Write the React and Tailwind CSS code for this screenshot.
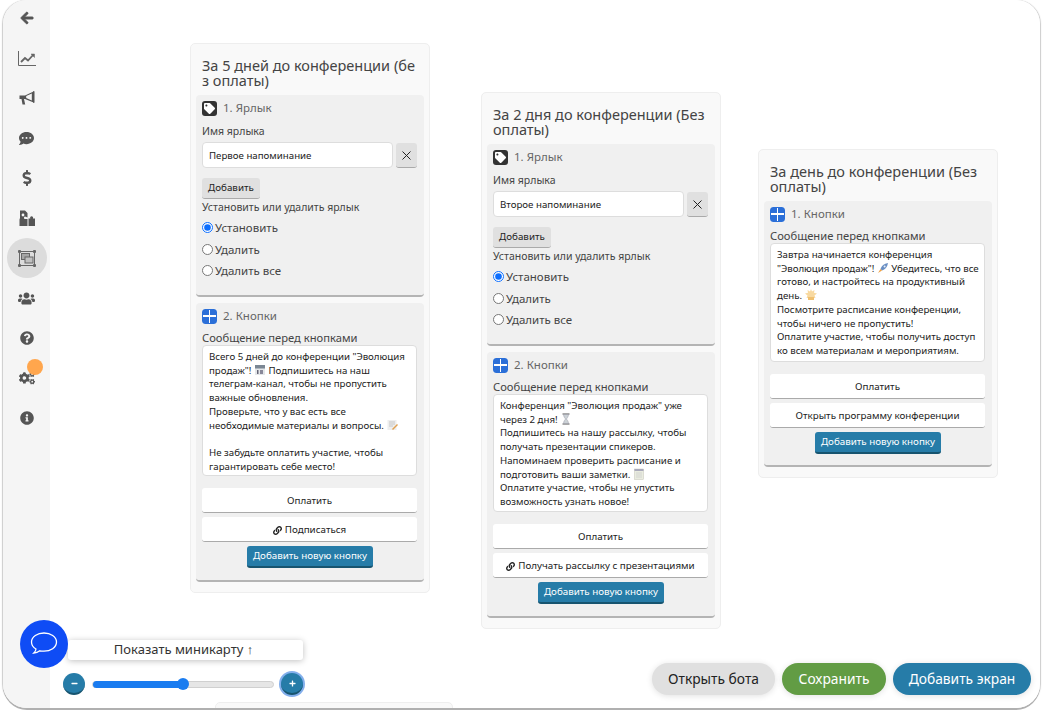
import React from "react";
import { FaArrowLeft, FaCommentDots, FaDollarSign, FaUsers, FaQuestionCircle, FaCogs, FaInfoCircle, FaLink, FaTag, FaPlus, FaMinus } from "react-icons/fa";

const Emoji = ({ kind }) => {
  const c = "inline-block w-[12px] h-[12px] align-[-2px]";
  if (kind === "cal") return <svg className={c} viewBox="0 0 12 12"><rect x="1" y="1" width="10" height="10" fill="#e4e7ea" /><rect x="1" y="1" width="10" height="3.5" fill="#7b8794" /><rect x="3" y="6" width="1.5" height="4" fill="#667" /><rect x="6" y="6" width="3" height="4" fill="#889" /></svg>;
  if (kind === "memo") return <svg className={c} viewBox="0 0 12 12"><rect x="1.5" y="1" width="9" height="10" fill="#eee" /><path d="M3 3h6M3 5h6M3 7h4" stroke="#bbb" strokeWidth="0.8" /><path d="M6 10l5-5 1 1-5 5z" fill="#e0a050" /></svg>;
  if (kind === "glass") return <svg className={c} viewBox="0 0 12 12"><path d="M2.5 1h7M2.5 11h7" stroke="#555" strokeWidth="1.2" /><path d="M3.5 1.5h5C8.5 4 7 5 6.5 6 7 7 8.5 8 8.5 10.5h-5C3.5 8 5 7 5.5 6 5 5 3.5 4 3.5 1.5z" fill="#ccd2d6" stroke="#889" strokeWidth="0.4" /></svg>;
  if (kind === "note") return <svg className={c} viewBox="0 0 12 12"><rect x="1.5" y="1" width="9" height="10.5" fill="#e9ecdf" stroke="#c3c3b8" strokeWidth="0.5" /><rect x="1.5" y="1" width="9" height="2" fill="#aab" /><path d="M3 5h6M3 7h6M3 9h6" stroke="#ccc" strokeWidth="0.7" /></svg>;
  if (kind === "rocket") return <svg className={c} viewBox="0 0 12 12"><path d="M11 1C7 1.5 4.5 4 3.5 7L5 8.5C8 7.5 10.5 5 11 1z" fill="#6a8fc4" /><path d="M3.5 7L1 11l4-2.5z" fill="#f0a040" /><circle cx="7.6" cy="4.4" r="1" fill="#e8eef6" /></svg>;
  return <svg className={c} viewBox="0 0 12 12"><path d="M6 0l1 2.5L9.5 1 9 3.8 12 4.5 9.5 6.5 10.5 9 1.5 9 2.5 6.5 0 4.5 3 3.8 2.5 1 5 2.5z" fill="#f8d9a0" /><rect x="3" y="8" width="6" height="3" fill="#f0c070" /></svg>;
};

const SideIcon = ({ children, active, dot }) => (
  <div className={`relative w-[40px] h-[40px] flex items-center justify-center rounded-full text-[#555] ${active ? "bg-[#dcdcdc]" : ""}`}>
    {children}
    {dot && <span className="absolute left-[20px] top-[1px] w-[16px] h-[16px] rounded-full bg-[#ffa64d]" />}
  </div>
);

const Sidebar = () => (
  <div className="w-[47px] shrink-0 bg-[#f5f5f5] flex flex-col items-center">
    <div className="-mt-[2px] flex flex-col items-center">
      <SideIcon><FaArrowLeft size={14} stroke="currentColor" strokeWidth={30} /></SideIcon>
      <SideIcon>
        <svg width="18" height="15" viewBox="0 0 18 15" fill="none" stroke="#666"><path d="M0.5 0v14.500H18" strokeWidth="1" /><path d="M3 11l4-4 3 2.500L15.500 3.500" strokeWidth="1.800" /><path d="M13 3h3.500v3.500z" fill="#666" strokeWidth="0.5" /></svg>
      </SideIcon>
      <SideIcon>
        <svg width="16" height="15" viewBox="0 0 16 15" fill="#555"><path d="M0.500 4.500h5.500L14 0.800v10.400L6 8H5l1.200 5.500H3.500L2.500 8h-2z" /><path d="M7.200 4.900L12.800 2.600v6.800L7.200 7.100z" fill="#f5f5f5" /><rect x="14" y="0" width="1.500" height="12" rx="0.700" /></svg>
      </SideIcon>
      <SideIcon><FaCommentDots size={15} /></SideIcon>
      <SideIcon><FaDollarSign size={16} /></SideIcon>
      <SideIcon>
        <svg width="16" height="16" viewBox="0 0 16 16" fill="#555"><path d="M1 0.500h5l2.500 2.500v4.500c-1 0-1.500-1-2.500-1S4.500 8 5.500 9H8.500v7H0.500V9.500C0.500 9 1 8.500 1 8z" /><path d="M9.500 8.500h1.800a1.500 1.500 0 1 1 2.600 0H16V16H9.500z" /><circle cx="4" cy="5" r="1.400" fill="#f5f5f5" /></svg>
      </SideIcon>
      <SideIcon active>
        <svg width="18" height="17" viewBox="0 0 18 17" fill="none" stroke="#666" strokeWidth="1"><rect x="1.500" y="1.500" width="15" height="14" /><rect x="3.500" y="3.500" width="8" height="6" fill="#a5a5a5" /><rect x="7" y="7" width="8" height="6" fill="#c0c0c0" /><g fill="#666" stroke="none"><rect x="0" y="0" width="3" height="3" rx="1" /><rect x="15" y="0" width="3" height="3" rx="1" /><rect x="0" y="14" width="3" height="3" rx="1" /><rect x="15" y="14" width="3" height="3" rx="1" /></g></svg>
      </SideIcon>
      <SideIcon><FaUsers size={17} /></SideIcon>
      <SideIcon><FaQuestionCircle size={14} /></SideIcon>
      <SideIcon dot><FaCogs size={16} /></SideIcon>
      <SideIcon><FaInfoCircle size={14} /></SideIcon>
    </div>
  </div>
);

const TagIcon = () => (
  <span className="w-[15px] h-[15px] rounded-[3px] bg-[#333] text-white flex items-center justify-center shrink-0"><FaTag size={11} /></span>
);
const GridIcon = () => (
  <span className="w-[15px] h-[15px] rounded-[3px] bg-white border-[1.500px] border-[#2b6fd8] grid grid-cols-2 gap-[1.500px] shrink-0">
    <i className="bg-[#2b6fd8]" /><i className="bg-[#2b6fd8]" /><i className="bg-[#2b6fd8]" /><i className="bg-[#2b6fd8]" />
  </span>
);

const Section = ({ icon, title, children, className = "" }) => (
  <div className={`bg-[#f0f0f0] rounded-[4px] border-b-2 border-[#b4b4b4] px-[6px] pt-[5px] ${className}`}>
    <div className="flex items-center gap-[6px] h-[16px] text-[11.500px] text-[#666]">{icon}<span>{title}</span></div>
    {children}
  </div>
);

const Radio = ({ label, checked }) => (
  <label className="flex items-center gap-[2px] h-[21.500px] text-[11.500px] text-[#444]">
    <input type="radio" readOnly checked={!!checked} className="w-[11px] h-[11px] m-0 accent-[#0d6efd]" />
    {label}
  </label>
);

const LabelSection = ({ value, h }) => (
  <Section icon={<TagIcon />} title="1. Ярлык" className={h}>
    <div className="mt-[8px] text-[10.500px] leading-[14px] text-[#444]">Имя ярлыка</div>
    <div className="flex gap-[3px] mt-[4px]">
      <input readOnly value={value} className="w-[191px] h-[26px] bg-white border border-[#ddd] rounded-[4px] px-[6px] text-[9.700px] text-[#222] outline-none" />
      <button className="w-[21px] h-[25px] mt-[1px] bg-[#e0e0e0] rounded-[3px] border-b border-[#aaa] flex items-center justify-center text-[#222]">
        <svg width="9" height="9" viewBox="0 0 9 9" stroke="#222" strokeWidth="1"><path d="M0.500 0.500l8 8M8.500 0.500l-8 8" /></svg>
      </button>
    </div>
    <button className="block mt-[10px] w-[58px] h-[21px] bg-[#e0e0e0] rounded-[3px] border-b border-[#aaa] text-[9.800px] text-[#222]">Добавить</button>
    <div className="mt-[1px] text-[10.500px] leading-[14px] text-[#444]">Установить или удалить ярлык</div>
    <div className="mt-[3px]">
      <Radio label="Установить" checked />
      <Radio label="Удалить" />
      <Radio label="Удалить все" />
    </div>
  </Section>
);

const WhiteBtn = ({ children }) => (
  <button className="w-[215px] h-[25px] pt-[2px] bg-white rounded-[3px] border-b border-[#aaa] text-[9.800px] text-[#222] flex items-center justify-center gap-[3px]">{children}</button>
);

const ButtonsSection = ({ num, lines, btn2, h, taH }) => (
  <Section icon={<GridIcon />} title={`${num}. Кнопки`} className={h}>
    <div className="mt-[6px] text-[11.200px] leading-[15px] text-[#444]">Сообщение перед кнопками</div>
    <div className={`w-[215px] ${taH} bg-white border border-[#ddd] rounded-[4px] px-[6px] pt-[4px] text-[9.700px] leading-[13.700px] text-[#222] overflow-hidden`}>
      {lines.map((l, i) => <div key={i} className="min-h-[13.700px] whitespace-nowrap">{l}</div>)}
    </div>
    <div className="mt-[12px] flex flex-col gap-[4px]">
      <WhiteBtn>Оплатить</WhiteBtn>
      <WhiteBtn>{btn2}</WhiteBtn>
    </div>
    <div className="flex justify-center mt-[4px]">
      <button className="w-[126px] h-[22px] bg-[#267ca8] rounded-[3px] border-b-2 border-[#17546f] text-[9.800px] text-white">Добавить новую кнопку</button>
    </div>
  </Section>
);

const Card = ({ pos, title, children }) => (
  <div className={`absolute ${pos} w-[240px] bg-[#f9f9f9] border border-[#eeeeee] rounded-[5px] px-[5px]`}>
    <div className="px-[6px] pt-[14px] pb-[7px] text-[14.500px] leading-[15px] text-[#444] break-all">{title}</div>
    <div className="flex flex-col gap-[6px] pb-[10px]">{children}</div>
  </div>
);

const Canvas = () => (
  <div className="relative flex-1 bg-white">
    <Card pos="left-[140px] top-[43px]" title="За 5 дней до конференции (без оплаты)">
      <LabelSection value="Первое напоминание" h="h-[202px]" />
      <ButtonsSection num={2} h="h-[279px]" taH="h-[131px]"
        btn2={<><FaLink size={9} /> Подписаться</>}
        lines={[
          'Всего 5 дней до конференции "Эволюция',
          <>продаж"! <Emoji kind="cal" /> Подпишитесь на наш</>,
          "телеграм-канал, чтобы не пропустить",
          "важные обновления.",
          "Проверьте, что у вас есть все",
          <>необходимые материалы и вопросы. <Emoji kind="memo" /></>,
          "",
          "Не забудьте оплатить участие, чтобы",
          "гарантировать себе место!",
        ]} />
    </Card>
    <Card pos="left-[431px] top-[92px]" title="За 2 дня до конференции (Без оплаты)">
      <LabelSection value="Второе напоминание" h="h-[202px]" />
      <ButtonsSection num={2} h="h-[266px]" taH="h-[118px]"
        btn2={<><FaLink size={9} /> Получать рассылку с презентациями</>}
        lines={[
          'Конференция "Эволюция продаж" уже',
          <>через 2 дня! <Emoji kind="glass" /></>,
          "Подпишитесь на нашу рассылку, чтобы",
          "получать презентации спикеров.",
          "Напоминаем проверить расписание и",
          <>подготовить ваши заметки. <Emoji kind="note" /></>,
          "Оплатите участие, чтобы не упустить",
          "возможность узнать новое!",
        ]} />
    </Card>
    <Card pos="left-[708px] top-[149px]" title="За день до конференции (Без оплаты)">
      <ButtonsSection num={1} h="h-[266px]" taH="h-[119px]"
        btn2="Открыть программу конференции"
        lines={[
          "Завтра начинается конференция",
          <>"Эволюция продаж"! <Emoji kind="rocket" /> Убедитесь, что все</>,
          "готово, и настройтесь на продуктивный",
          <>день. <Emoji kind="spark" /></>,
          "Посмотрите расписание конференции,",
          "чтобы ничего не пропустить!",
          "Оплатите участие, чтобы получить доступ",
          "ко всем материалам и мероприятиям.",
        ]} />
    </Card>
    <div className="absolute left-[165px] top-[702px] w-[238px] h-[20px] bg-[#f9f9f9] border border-[#eeeeee] rounded-[5px]" />

    <button className="absolute left-[18px] top-[640px] w-[235px] h-[20px] pr-[4px] bg-white rounded-[3px] shadow-[0_1px_6px_rgba(0,0,0,0.25)] text-[13px] text-[#333]">Показать миникарту ↑</button>

    <div className="absolute left-[-30px] top-[620px] w-[48px] h-[48px] rounded-full bg-[#0f4cf5] flex items-center justify-center">
      <svg width="28" height="26" viewBox="0 0 28 26" fill="none" stroke="white" strokeWidth="1.300"><path d="M14 2C7.500 2 1.500 5.500 1.500 11c0 3 1.800 5.500 4.500 7-.2 1.500-1 3-2.200 4 2.200 0 4.500-1 6-2.200 1.400.3 2.800.4 4.200.4 6.500 0 12.500-3.700 12.500-9.200S20.500 2 14 2z" /></svg>
    </div>

    <div className="absolute left-[13px] top-[673px] w-[240px] h-[22px] flex items-center justify-between">
      <span className="w-[22px] h-[22px] rounded-full bg-[#267ca8] border-b-2 border-[#17546f] text-white flex items-center justify-center"><FaMinus size={7} /></span>
      <div className="relative w-[182px] h-[7px] rounded-full bg-[#e6e6e6] border border-[#d0d0d0]">
        <div className="absolute left-0 top-[-1px] h-[7px] w-[91px] rounded-full bg-[#1a7cf0]" />
        <div className="absolute left-[84px] top-[-4px] w-[12px] h-[12px] rounded-full bg-[#1a7cf0]" />
      </div>
      <span className="w-[22px] h-[22px] rounded-full bg-[#267ca8] border-b-2 border-[#17546f] text-white flex items-center justify-center shadow-[0_0_0_2px_rgba(30,110,220,0.55)]"><FaPlus size={7} /></span>
    </div>

    <div className="absolute right-[9px] top-[663px] flex gap-[7px]">
      <button className="w-[123px] h-[32px] rounded-full bg-[#e0e0e0] text-[13.800px] text-[#222] shadow-[0_1px_6px_rgba(0,0,0,0.12)]">Открыть бота</button>
      <button className="w-[104px] h-[32px] rounded-full bg-[#629c44] text-[13.800px] text-white shadow-[0_1px_6px_rgba(0,0,0,0.12)]">Сохранить</button>
      <button className="w-[138px] h-[32px] rounded-full bg-[#267ca8] text-[13.800px] text-white shadow-[0_1px_6px_rgba(0,0,0,0.12)]">Добавить экран</button>
    </div>
  </div>
);

export default function App() {
  return (
    <div className="w-[1044px] h-[716px] bg-white overflow-hidden px-[3px] font-['Noto_Sans',sans-serif]">
      <div className="w-[1037px] h-[708px] flex rounded-[24px] overflow-hidden bg-white shadow-[0_2px_0_#b0b0b0,1px_0_1px_#cccccc,-1px_0_1px_#cccccc]">
        <Sidebar />
        <Canvas />
      </div>
    </div>
  );
}
